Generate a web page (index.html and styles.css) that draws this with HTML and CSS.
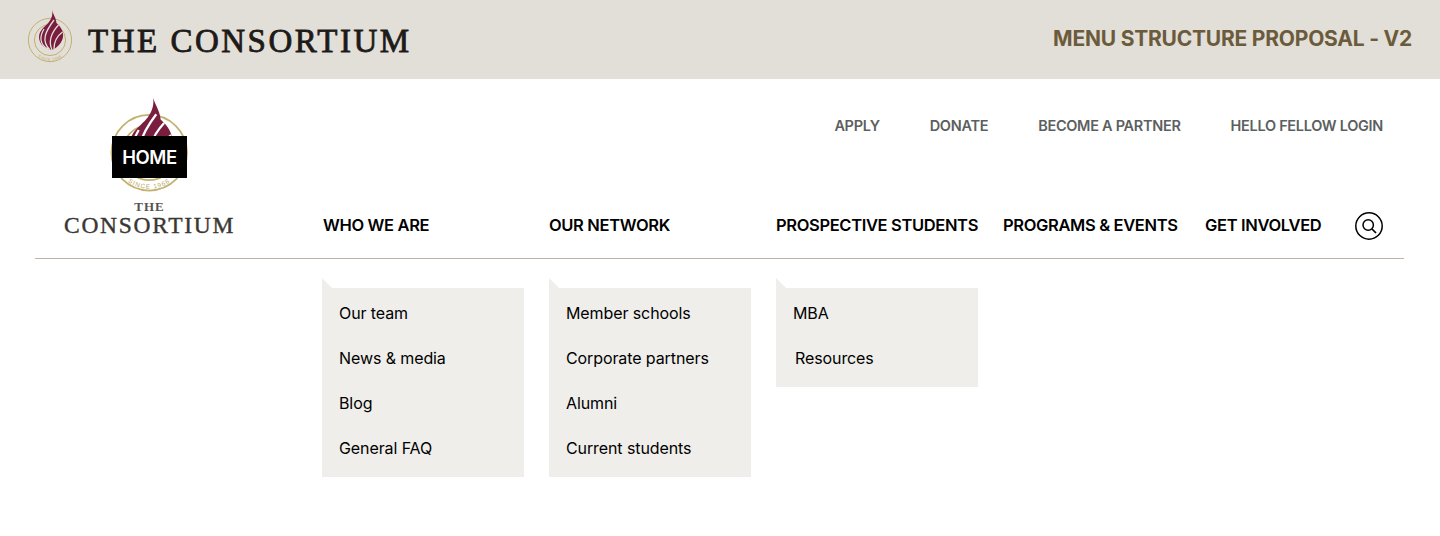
FILE: index.html
```html
<!DOCTYPE html>
<html lang="en">
<head>
<meta charset="utf-8">
<title>The Consortium - Menu structure proposal</title>
<link rel="stylesheet" href="styles.css">
</head>
<body>
<header class="banner">
  <div class="banner-brand">
    <svg class="banner-seal" viewBox="0 0 46 54" aria-hidden="true">
      <circle class="ring" cx="23" cy="31" r="21.6"/>
      <circle class="ring" cx="23" cy="31" r="15.6"/>
      <path class="flame" d="M25 0C25.5 5 29 8 29.5 14C33 17 37 22 36 28C35 34 30 39 25 41C18 40 12 35 12 28C12 21 18 18 22 13C25 9 26 5 25 0Z"/>
      <path class="stripes" d="M23 41C14 32 18 23 27 11M25 41C21 32 25 23 31.5 16M27 40C27 33 30 27 35.5 23M21 40C13 36 12 28 17 20"/>
      <path id="arc-a" class="arc" d="M2.9 35.5A20.6 20.6 0 0 0 43.1 35.5"/>
      <text class="seal-text"><textPath href="#arc-a" startOffset="50%" text-anchor="middle">SINCE 1966</textPath></text>
    </svg>
    <span class="banner-name">THE CONSORTIUM</span>
  </div>
  <div class="banner-title">MENU STRUCTURE PROPOSAL - V2</div>
</header>

<div class="site">
  <div class="masthead">
    <a class="logo">
      <svg class="logo-seal" viewBox="0 0 46 56" aria-hidden="true">
        <circle class="ring" cx="23" cy="33" r="21.6"/>
        <circle class="ring" cx="23" cy="33" r="15.6"/>
        <path class="flame" d="M25 0C25.5 5 29 8 29.5 14C33 17 37 22 36 28C35 34 30 39 25 41C18 40 12 35 12 28C12 21 18 18 22 13C25 9 26 5 25 0Z"/>
        <path class="stripes" d="M23 41C14 32 18 23 27 11M25 41C21 32 25 23 31.5 16M27 40C27 33 30 27 35.5 23M21 40C13 36 12 28 17 20"/>
        <path id="arc-b" class="arc" d="M2.9 37.5A20.6 20.6 0 0 0 43.1 37.5"/>
        <text class="seal-text"><textPath href="#arc-b" startOffset="50%" text-anchor="middle">SINCE 1966</textPath></text>
      </svg>
      <span class="logo-the">THE</span>
      <span class="logo-name">CONSORTIUM</span>
      <span class="home-tag">HOME</span>
    </a>
    <div class="masthead-main">
      <nav class="utility">
        <a>APPLY</a>
        <a>DONATE</a>
        <a>BECOME A PARTNER</a>
        <a>HELLO FELLOW LOGIN</a>
      </nav>
      <nav class="primary">
        <a class="first">WHO WE ARE</a>
        <a>OUR NETWORK</a>
        <a>PROSPECTIVE STUDENTS</a>
        <a>PROGRAMS &amp; EVENTS</a>
        <a>GET INVOLVED</a>
        <span class="search">
          <svg viewBox="0 0 28 28" width="28" height="28" fill="none" stroke="#000">
            <circle cx="14" cy="14" r="13.2" stroke-width="1.5"/>
            <circle cx="13.2" cy="13" r="5.2" stroke-width="1.5"/>
            <path d="M17 17l4 4" stroke-width="1.7"/>
          </svg>
        </span>
      </nav>
    </div>
  </div>

  <div class="dropdowns">
    <ul class="menu">
      <li>Our team</li>
      <li>News &amp; media</li>
      <li>Blog</li>
      <li>General FAQ</li>
    </ul>
    <ul class="menu">
      <li>Member schools</li>
      <li>Corporate partners</li>
      <li>Alumni</li>
      <li>Current students</li>
    </ul>
    <ul class="menu">
      <li>MBA</li>
      <li class="nudge">Resources</li>
    </ul>
  </div>
</div>
</body>
</html>
```

FILE: styles.css
```css
* { box-sizing: border-box; }

html, body { margin: 0; padding: 0; }

body {
  background: #fff;
  color: #000;
  font-family: Inter, "Liberation Sans", sans-serif;
  height: 536px;
  overflow: hidden;
}

.ring { fill: none; stroke: #c4b06e; stroke-width: 1; }
.flame { fill: #7a1d3e; }
.arc { fill: none; }
.stripes { fill: none; stroke: #fff; stroke-width: 1.3; }
.banner .stripes { stroke: #e2dfd8; }

.seal-text {
  font-family: "Liberation Sans", sans-serif;
  font-size: 3.6px;
  letter-spacing: 0.6px;
  fill: #b9a662;
}

.banner {
  height: 79px;
  background: #e2dfd8;
  display: flex;
  align-items: center;
  justify-content: space-between;
  padding: 0 28px 0 27px;
}

.banner-brand {
  display: flex;
  align-items: center;
  gap: 15px;
}

.banner-seal {
  width: 46px;
  height: 54px;
  margin-top: -8px;
}

.banner-name {
  font-family: "Liberation Serif", serif;
  font-size: 33px;
  font-weight: 400;
  -webkit-text-stroke: 0.8px #1d1a18;
  letter-spacing: 2.5px;
  line-height: 40px;
  color: #1d1a18;
  margin-top: 3px;
}

.banner-title {
  font-size: 21px;
  font-weight: 700;
  letter-spacing: -0.22px;
  color: #6b5b3c;
  margin-top: -3px;
}

.site {
  padding: 0 36px 0 35px;
}

.masthead {
  display: flex;
  height: 180px;
  border-bottom: 1px solid #bfb1a3;
}

.logo {
  position: relative;
  flex: 0 0 287px;
  display: flex;
  flex-direction: column;
  align-items: center;
  padding: 16px 58px 0 0;
  font-family: "Liberation Serif", serif;
  color: #3a3735;
}

.logo-seal {
  width: 80.5px;
  height: 98px;
  flex: none;
}

.logo-the {
  font-size: 13px;
  font-weight: 700;
  letter-spacing: 1px;
  line-height: 14px;
  margin-top: 7px;
  color: #555250;
}

.logo-name {
  font-size: 23.5px;
  letter-spacing: 1.7px;
  line-height: 22px;
  white-space: nowrap;
  -webkit-text-stroke: 0.4px #3a3735;
}

.home-tag {
  position: absolute;
  left: 77px;
  top: 57px;
  width: 75px;
  height: 42px;
  background: #000;
  color: #fff;
  font-family: Inter, "Liberation Sans", sans-serif;
  font-size: 18.5px;
  font-weight: 600;
  letter-spacing: -0.4px;
  display: flex;
  align-items: center;
  justify-content: center;
}

.masthead-main {
  flex: 1;
  display: flex;
  flex-direction: column;
}

.utility {
  display: flex;
  justify-content: flex-end;
  gap: 50px;
  padding: 38px 21px 0 0;
  font-size: 14.5px;
  font-weight: 600;
  line-height: 18px;
  letter-spacing: -0.3px;
  color: #5c5f60;
}

.primary {
  display: grid;
  grid-template-columns: 202px 202px 202px 177px 1fr 28px;
  column-gap: 25px;
  align-items: center;
  height: 28px;
  margin: 77px 21px 0 0;
  font-size: 16.5px;
  font-weight: 600;
  letter-spacing: -0.35px;
  white-space: nowrap;
}

.primary a { padding-bottom: 2px; }
.primary a.first { padding-left: 1px; }

.search { display: block; height: 28px; }

.dropdowns {
  display: flex;
  align-items: flex-start;
  gap: 25px;
  padding: 29px 0 0 287px;
}

.menu {
  position: relative;
  width: 202px;
  margin: 0;
  padding: 3px 0 5.5px;
  list-style: none;
  background: #efeeeb;
  font-size: 16px;
  letter-spacing: -0.1px;
}

.menu::before {
  content: "";
  position: absolute;
  left: 0;
  top: -10px;
  border-left: 10px solid #efeeeb;
  border-top: 10px solid transparent;
}

.menu li {
  height: 45px;
  line-height: 45px;
  padding-left: 17px;
}

.menu li.nudge { padding-left: 19px; }
```
